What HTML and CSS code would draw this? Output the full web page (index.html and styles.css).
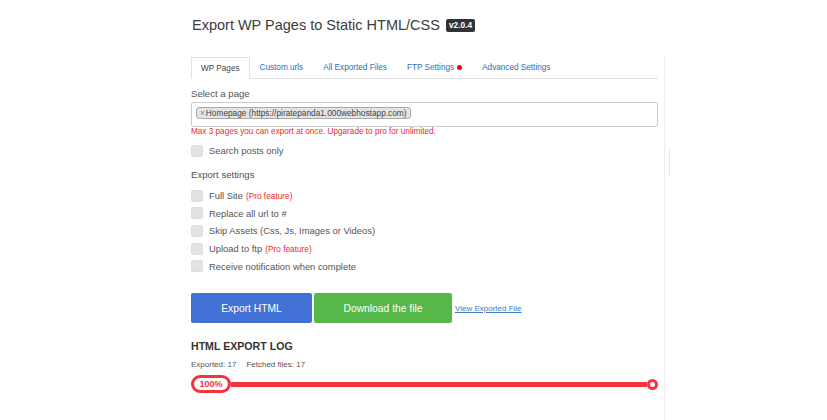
FILE: index.html
```html
<!DOCTYPE html>
<html lang="en">

<head>
    <meta charset="UTF-8">
    <meta name="viewport" content="width=device-width, initial-scale=1.0">
    <title>Export WP Pages to Static HTML/CSS</title>

    <link rel="stylesheet" href="styles.css">
</head>

<body>
    <div class="wrap">
        <h1 class="title">Export WP Pages to Static HTML/CSS <span class="version">v2.0.4</span></h1>

        <div class="panel">
            <ul class="tabs">
                <li class="active">WP Pages</li>
                <li>Custom urls</li>
                <li>All Exported Files</li>
                <li>FTP Settings <i class="dot"></i></li>
                <li>Advanced Settings</li>
            </ul>

            <div class="field-label">Select a page</div>
            <div class="select">
                <span class="tag"><b>×</b>Homepage (https://piratepanda1.000webhostapp.com)</span>
            </div>
            <div class="warn">Max 3 pages you can export at once. Upgarade to pro for unlimited.</div>

            <label class="check first"><span class="box"></span>Search posts only</label>

            <div class="field-label settings">Export settings</div>
            <label class="check"><span class="box"></span>Full Site <em>(Pro feature)</em></label>
            <label class="check"><span class="box"></span>Replace all url to #</label>
            <label class="check"><span class="box"></span>Skip Assets (Css, Js, Images or Videos)</label>
            <label class="check"><span class="box"></span>Upload to ftp <em>(Pro feature)</em></label>
            <label class="check"><span class="box"></span>Receive notification when complete</label>

            <div class="actions">
                <button class="btn btn-blue">Export HTML</button>
                <button class="btn btn-green">Download the file</button>
                <a class="view-link" href="#">View Exported File</a>
            </div>

            <h2 class="log-title">HTML EXPORT LOG</h2>
            <div class="log-stats"><span>Exported: 17</span><span>Fetched files: 17</span></div>

            <div class="progress">
                <span class="percent">100%</span>
                <span class="bar"></span>
                <span class="end"></span>
            </div>
        </div>
    </div>
    <div class="scroll-mark"></div>
</body>

</html>
```

FILE: styles.css
```css
* {
    margin: 0;
    padding: 0;
    list-style: none;
    box-sizing: border-box;
}

body {
    font-family: "Liberation Sans", Arial, sans-serif;
    color: #555;
    background: #fff;
    font-size: 9.4px;
}

.wrap {
    width: 474px;
    margin-left: 191px;
    padding-top: 14px;
}

.title {
    font-size: 14.5px;
    font-weight: normal;
    color: #3c3c3c;
    line-height: 22px;
    display: flex;
    align-items: center;
    gap: 6px;
    padding-left: 1px;
}

.version {
    background: #2f3338;
    color: #fff;
    font-size: 8.3px;
    font-weight: bold;
    border-radius: 2px;
    padding: 0 3px;
    line-height: 13px;
    margin-top: 1px;
}

.panel {
    margin-top: 21px;
    border-right: 1px solid #eee;
    padding-right: 6px;
    padding-bottom: 30px;
}

.tabs {
    display: flex;
    border-bottom: 1px solid #e3e3e3;
    height: 22px;
}

.tabs li {
    padding: 0 10px;
    line-height: 21px;
    color: #2a6ebd;
    font-size: 8.2px;
    display: flex;
    align-items: center;
    gap: 3px;
}

.tabs li.active {
    color: #444;
    border: 1px solid #e3e3e3;
    border-bottom: 1px solid #fff;
    height: 22px;
    padding: 0 9px;
}

.tabs .dot {
    width: 5px;
    height: 5px;
    background: #e00;
    border-radius: 50%;
    display: inline-block;
}

.field-label {
    margin-top: 9px;
    font-size: 9.6px;
    color: #555;
    line-height: 11px;
}

.select {
    margin-top: 3px;
    height: 25px;
    border: 1px solid #ccc;
    border-radius: 2px;
    padding: 4px 4px;
}

.tag {
    display: inline-block;
    background: #e4e4e4;
    border: 1px solid #aaa;
    border-radius: 3px;
    padding: 0 3px;
    line-height: 10px;
    font-size: 8.3px;
    color: #444;
}

.tag b {
    font-weight: normal;
    color: #888;
    margin-right: 1px;
}

.warn {
    color: #f0282d;
    font-size: 8.2px;
    line-height: 10px;
}

.check {
    display: flex;
    align-items: center;
    height: 17.7px;
    font-size: 9.4px;
    color: #555;
}

.check.first {
    margin-top: 5px;
}

.box {
    width: 12px;
    height: 12px;
    background: #e2e2e2;
    border: 1px solid #ddd;
    border-radius: 2px;
    margin-right: 6px;
}

.check em {
    font-style: normal;
    color: #f0282d;
    font-size: 8.3px;
    margin-left: 3px;
}

.field-label.settings {
    margin-top: 9px;
    margin-bottom: 7px;
}

.actions {
    display: flex;
    align-items: center;
    gap: 2px;
    margin-top: 18px;
}

.btn {
    border: 0;
    color: #fff;
    font-family: "Liberation Sans", Arial, sans-serif;
    font-size: 10.3px;
    height: 30px;
    border-radius: 2px;
    cursor: pointer;
}

.btn-blue {
    background: #4372d6;
    width: 121px;
}

.btn-green {
    background: #55b848;
    width: 138px;
}

.view-link {
    color: #3b7dc4;
    font-size: 8px;
    margin-left: 1px;
    text-decoration: underline;
}

.log-title {
    margin-top: 16px;
    font-size: 10.6px;
    color: #333;
    line-height: 14px;
}

.log-stats {
    margin-top: 7px;
    font-size: 8px;
    color: #555;
    display: flex;
    gap: 10px;
}

.progress {
    margin-top: 6px;
    display: flex;
    align-items: center;
    width: 467px;
    position: relative;
}

.percent {
    border: 3px solid #f5333c;
    border-radius: 10px;
    color: #f5333c;
    font-weight: bold;
    font-size: 9px;
    width: 40px;
    height: 18px;
    display: flex;
    align-items: center;
    justify-content: center;
    background: #fff;
    position: relative;
    z-index: 1;
}

.bar {
    flex: 1;
    height: 5px;
    background: #f5333c;
}

.end {
    width: 11px;
    height: 11px;
    border: 3px solid #f5333c;
    border-radius: 50%;
    background: #fff;
}

.scroll-mark {
    position: absolute;
    left: 669px;
    top: 150px;
    width: 1px;
    height: 26px;
    background: #e4e4e4;
}
```
